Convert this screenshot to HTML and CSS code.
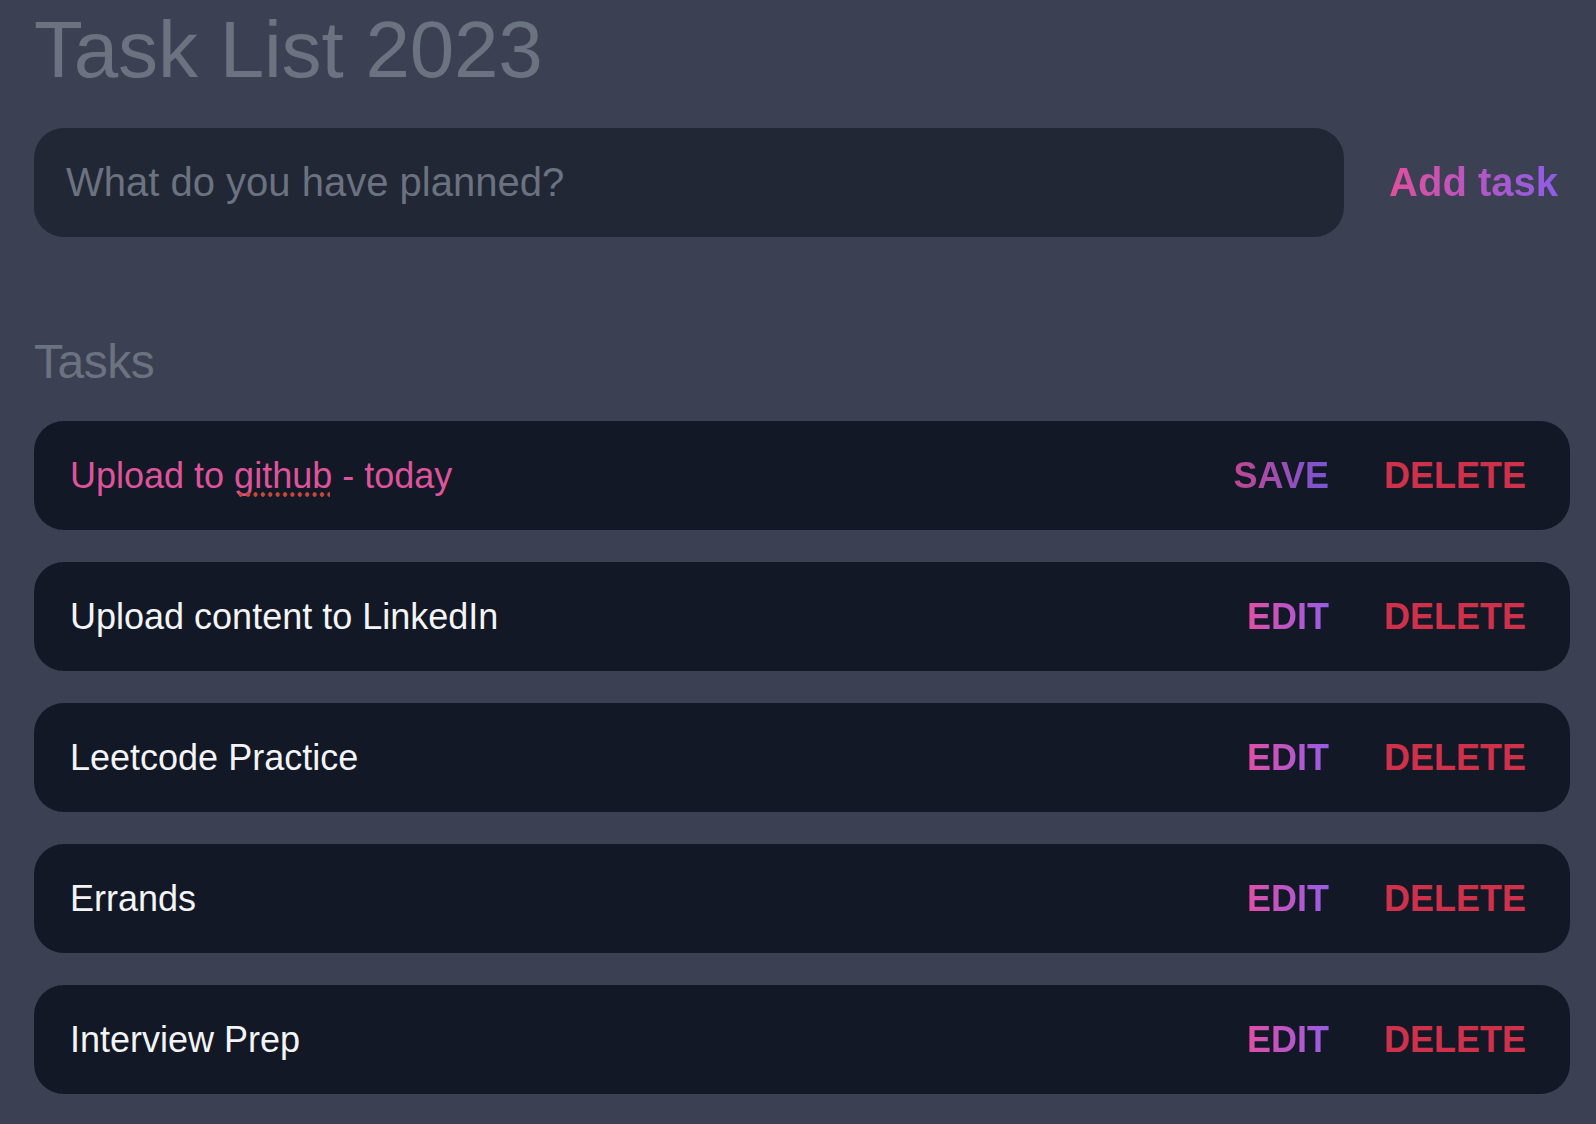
FILE: index.html
```html
<!DOCTYPE html>
<html lang="en">
<head>
<meta charset="utf-8">
<title>Task List 2023</title>
<link rel="stylesheet" href="styles.css">
</head>
<body>
<main class="app">
  <h1 class="title">Task List 2023</h1>
  <form class="new-task">
    <div class="new-task-input">What do you have planned?</div>
    <button type="button" class="add-btn"><span class="grad-text">Add task</span></button>
  </form>
  <h2 class="section-title">Tasks</h2>
  <ul class="tasks">
    <li class="task">
      <div class="task-text editing">Upload to <span class="misspelled">github</span> - today</div>
      <div class="actions">
        <button type="button" class="btn btn-save">SAVE</button>
        <button type="button" class="btn btn-delete">DELETE</button>
      </div>
    </li>
    <li class="task">
      <div class="task-text">Upload content to LinkedIn</div>
      <div class="actions">
        <button type="button" class="btn btn-edit">EDIT</button>
        <button type="button" class="btn btn-delete">DELETE</button>
      </div>
    </li>
    <li class="task">
      <div class="task-text">Leetcode Practice</div>
      <div class="actions">
        <button type="button" class="btn btn-edit">EDIT</button>
        <button type="button" class="btn btn-delete">DELETE</button>
      </div>
    </li>
    <li class="task">
      <div class="task-text">Errands</div>
      <div class="actions">
        <button type="button" class="btn btn-edit">EDIT</button>
        <button type="button" class="btn btn-delete">DELETE</button>
      </div>
    </li>
    <li class="task">
      <div class="task-text">Interview Prep</div>
      <div class="actions">
        <button type="button" class="btn btn-edit">EDIT</button>
        <button type="button" class="btn btn-delete">DELETE</button>
      </div>
    </li>
  </ul>
</main>
</body>
</html>
```

FILE: styles.css
```css
* {
  box-sizing: border-box;
}

html, body {
  margin: 0;
  padding: 0;
}

body {
  background: #3b4152;
  font-family: "Liberation Sans", Arial, Helvetica, sans-serif;
  color: #f3f4f6;
  min-height: 1124px;
}

.app {
  width: 1570px;
  padding-left: 34px;
}

.title {
  margin: 10px 0 38px 0;
  font-size: 80px;
  line-height: 80px;
  font-weight: 300;
  color: #6b7280;
  letter-spacing: -0.2px;
}

.new-task {
  display: flex;
  align-items: center;
  gap: 45px;
  margin: 0;
}

.new-task-input {
  flex: 1;
  height: 109px;
  display: flex;
  align-items: center;
  padding: 0 32px;
  background: #212735;
  border-radius: 30px;
  font-size: 40px;
  color: #6b7280;
}

.add-btn {
  background: none;
  border: 0;
  padding: 0 12px 0 0;
  font-family: inherit;
  font-size: 40px;
  font-weight: 700;
  cursor: pointer;
}

.grad-text {
  background: linear-gradient(90deg, #e14f9d, #8d5de8);
  -webkit-background-clip: text;
  background-clip: text;
  color: transparent;
}

.section-title {
  margin: 101px 0 35px 0;
  font-size: 48px;
  line-height: 48px;
  font-weight: 300;
  color: #6b7280;
  letter-spacing: -0.5px;
}

.tasks {
  list-style: none;
  margin: 0;
  padding: 0;
  display: flex;
  flex-direction: column;
  gap: 32px;
}

.task {
  height: 109px;
  display: flex;
  align-items: center;
  justify-content: space-between;
  padding: 0 44px 0 36px;
  background: #131826;
  border-radius: 30px;
}

.task-text {
  font-size: 36px;
  color: #f3f4f6;
}

.task-text.editing {
  color: #de549b;
}

.misspelled {
  position: relative;
}

.misspelled::after {
  content: "";
  position: absolute;
  left: 3px;
  right: 2px;
  bottom: -1px;
  height: 5px;
  background-image: radial-gradient(circle, #c4483c 2px, transparent 2.5px);
  background-size: 7.4px 5px;
  background-repeat: repeat-x;
}

.actions {
  display: flex;
  align-items: center;
  gap: 55px;
}

.btn {
  background: none;
  border: 0;
  padding: 0;
  font-family: inherit;
  font-size: 36px;
  font-weight: 700;
  cursor: pointer;
  -webkit-background-clip: text;
  background-clip: text;
  color: transparent;
}

.btn-save {
  background-image: linear-gradient(90deg, #bf478f, #7955d8);
}

.btn-edit {
  background-image: linear-gradient(90deg, #e04fa6, #985de6);
}

.btn-delete {
  background: none;
  color: #d0314a;
}
```
